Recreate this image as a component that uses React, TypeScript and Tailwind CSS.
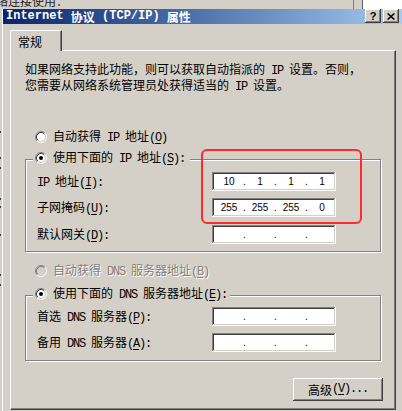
import React from 'react';

const sunken =
  'shadow-[inset_-1px_-1px_#ffffff,inset_1px_1px_#808080,inset_-2px_-2px_#d4d0c8,inset_2px_2px_#404040]';
const raised =
  'shadow-[inset_-1px_-1px_#404040,inset_1px_1px_#ffffff,inset_-2px_-2px_#808080,inset_2px_2px_#d4d0c8]';
const etched = 'border border-[#808080] shadow-[inset_1px_1px_#ffffff,1px_1px_#ffffff]';

// latin runs get a 6px-wide mono face so widths follow the old bitmap font
function Ascii({ s, bold }: { s: string; bold?: boolean }) {
  const bits = s.split(/(&.)/).filter(Boolean);
  return (
    <span
      className={
        bold
          ? "whitespace-pre font-['Liberation_Mono',monospace] font-bold"
          : "whitespace-pre font-['Liberation_Mono',monospace] tracking-[-1.2px]"
      }
    >
      {bits.map((b, i) =>
        b.startsWith('&') ? (
          <span key={i} className="underline underline-offset-[2px]">
            {b.slice(1)}
          </span>
        ) : (
          <React.Fragment key={i}>{b}</React.Fragment>
        )
      )}
    </span>
  );
}

function T({ s, bold }: { s: string; bold?: boolean }) {
  const parts = s.split(/([\x20-\x7e]+)/).filter(Boolean);
  return (
    <>
      {parts.map((p, i) =>
        /^[\x20-\x7e]+$/.test(p) ? <Ascii key={i} s={p} bold={bold} /> : <span key={i}>{p}</span>
      )}
    </>
  );
}

function Radio({ checked, disabled }: { checked?: boolean; disabled?: boolean }) {
  return (
    <svg width="12" height="12" viewBox="0 0 12 12" className="shrink-0">
      <circle cx="6" cy="6" r="4" fill={disabled ? '#d4d0c8' : '#ffffff'} />
      <path d="M2.11 9.89A5.5 5.5 0 0 1 9.89 2.11" stroke="#808080" fill="none" />
      <path d="M9.89 2.11A5.5 5.5 0 0 1 2.11 9.89" stroke="#ffffff" fill="none" />
      <path d="M2.82 9.18A4.5 4.5 0 0 1 9.18 2.82" stroke={disabled ? '#808080' : '#404040'} fill="none" />
      <path d="M9.18 2.82A4.5 4.5 0 0 1 2.82 9.18" stroke="#d4d0c8" fill="none" />
      {checked && <circle cx="6" cy="6" r="2" fill="#000000" />}
    </svg>
  );
}

function IpField({ v }: { v?: string[] }) {
  const segs = v ?? ['', '', '', ''];
  return (
    <div
      className={`flex h-[19px] w-[124px] shrink-0 items-center bg-white pl-[4px] font-['Liberation_Sans',sans-serif] text-[10px] leading-none ${sunken}`}
    >
      {segs.map((s, i) => (
        <React.Fragment key={i}>
          {i > 0 && <span className="w-[5px] text-center">.</span>}
          <span className="w-[26px] text-center">{s}</span>
        </React.Fragment>
      ))}
    </div>
  );
}

function Row({ label, v, className = '' }: { label: string; v?: string[]; className?: string }) {
  return (
    <div className={`flex h-[19px] items-center ${className}`}>
      <span className="w-[186px] pl-[11px]">
        <T s={label} />
      </span>
      <IpField v={v} />
    </div>
  );
}

export default function App() {
  return (
    <div className="relative flex h-[411px] w-[402px] flex-col overflow-hidden bg-[#d4d0c8] font-['Noto_Sans_CJK_SC',sans-serif] text-[12px] leading-[13px] text-black">
      {/* window behind */}
      <div className="flex h-[9px] shrink-0 overflow-hidden">
        <div className="w-[353px] bg-[#d4d0c8]">
          <div className="-ml-[4px] -mt-[6px] whitespace-nowrap text-[#202020]">络连接使用：</div>
        </div>
        <div className="w-[1px] bg-[#808080]" />
        <div className="w-[8px] bg-[#d4d0c8]" />
        <div className="w-[1px] bg-[#606060]" />
        <div className="flex-1 bg-white" />
      </div>

      <div className="flex flex-1">
        <div className="flex w-[2px] flex-col bg-[#d4d0c8]">
          <div className="mt-[122px] h-[2px] w-[1px] bg-[#404040]" />
          <div className="mt-[24px] h-[2px] w-[1px] bg-[#404040]" />
          <div className="mt-[8px] h-[2px] w-[1px] bg-[#404040]" />
          <div className="mt-[29px] h-[2px] w-[1px] bg-[#404040]" />
          <div className="mt-[6px] h-[2px] w-[1px] bg-[#404040]" />
          <div className="mt-[26px] h-[2px] w-[1px] bg-[#404040]" />
          <div className="mt-[38px] h-[2px] w-[1px] bg-[#404040]" />
          <div className="mt-[8px] h-[2px] w-[1px] bg-[#404040]" />
        </div>

        {/* dialog */}
        <div className="flex flex-1 flex-col border-l border-white">
          <div className="flex h-[15px] shrink-0 items-start bg-gradient-to-r from-[#0a246a] to-[#a6caf0] pr-[3px] text-white">
            <div className="flex h-[15px] flex-1 items-center pl-[3px] font-bold">
              <T s="Internet 协议 (TCP/IP) 属性" bold />
            </div>
            <div
              className={`flex h-[14px] w-[16px] items-center justify-center bg-[#d4d0c8] font-['Liberation_Sans',sans-serif] text-[11px] font-bold leading-none text-black ${raised}`}
            >
              ?
            </div>
            <div className={`ml-[2px] flex h-[14px] w-[16px] items-center justify-center bg-[#d4d0c8] ${raised}`}>
              <svg width="8" height="7" viewBox="0 0 8 7">
                <path d="M0.6 0.5L7.4 6.5M7.4 0.5L0.6 6.5" stroke="#000" strokeWidth="1.6" />
              </svg>
            </div>
          </div>

          <div className="flex flex-col pl-[7px] pr-[6px] pt-[6px]">
            <div className="flex">
              <div className="relative z-10 -mb-px h-[21px] w-[52px] rounded-tl-[2px] border-l border-r border-t border-white border-r-[#404040] bg-[#d4d0c8] pl-[7px] pt-[4px] shadow-[inset_-1px_0_#808080]">
                常规
              </div>
            </div>

            <div className="flex h-[360px] flex-col border border-white border-b-[#404040] border-r-[#404040] shadow-[inset_-1px_-1px_#808080]">
              <div className="ml-[14px] mt-[11px]">
                <div className="whitespace-nowrap">
                  <T s="如果网络支持此功能，则可以获取自动指派的 IP 设置。否则，" />
                </div>
                <div className="whitespace-nowrap">
                  <T s="您需要从网络系统管理员处获得适当的 IP 设置。" />
                </div>
              </div>

              <div className="ml-[24px] mt-[35px] flex h-[16px] items-center gap-[6px]">
                <Radio />
                <span>
                  <T s="自动获得 IP 地址(&O)" />
                </span>
              </div>

              <div className={`relative ml-[14px] mt-[14px] h-[93px] w-[356px] pt-[12px] ${etched}`}>
                <div className="absolute left-[7px] top-[-9px] flex h-[14px] items-center gap-[6px] bg-[#d4d0c8] pl-[2px] pr-[5px]">
                  <Radio checked />
                  <span>
                    <T s="使用下面的 IP 地址(&S):" />
                  </span>
                </div>
                <Row label="IP 地址(&I):" v={['10', '1', '1', '1']} />
                <Row label="子网掩码(&U):" v={['255', '255', '255', '0']} className="mt-[7px]" />
                <Row label="默认网关(&D):" className="mt-[8px]" />
              </div>

              <div className="ml-[24px] mt-[11px] flex h-[16px] items-center gap-[6px] text-[#808080] [text-shadow:1px_1px_0_#ffffff]">
                <Radio disabled />
                <span>
                  <T s="自动获得 DNS 服务器地址(&B)" />
                </span>
              </div>

              <div className={`relative ml-[14px] mt-[16px] h-[66px] w-[356px] pt-[11px] ${etched}`}>
                <div className="absolute left-[7px] top-[-9px] flex h-[14px] items-center gap-[6px] bg-[#d4d0c8] pl-[2px] pr-[3px]">
                  <Radio checked />
                  <span>
                    <T s="使用下面的 DNS 服务器地址(&E):" />
                  </span>
                </div>
                <Row label="首选 DNS 服务器(&P):" />
                <Row label="备用 DNS 服务器(&A):" className="mt-[7px]" />
              </div>

              <div className="mt-[17px] flex justify-end pr-[12px]">
                <div className={`flex h-[23px] w-[90px] items-center justify-center ${raised}`}>
                  <T s="高级(&V)..." />
                </div>
              </div>
            </div>
          </div>
        </div>
      </div>

      {/* red annotation */}
      <div className="pointer-events-none absolute left-[201px] top-[149px] h-[75px] w-[161px] rounded-[6px] border-2 border-[#ff2b2b]" />
    </div>
  );
}
